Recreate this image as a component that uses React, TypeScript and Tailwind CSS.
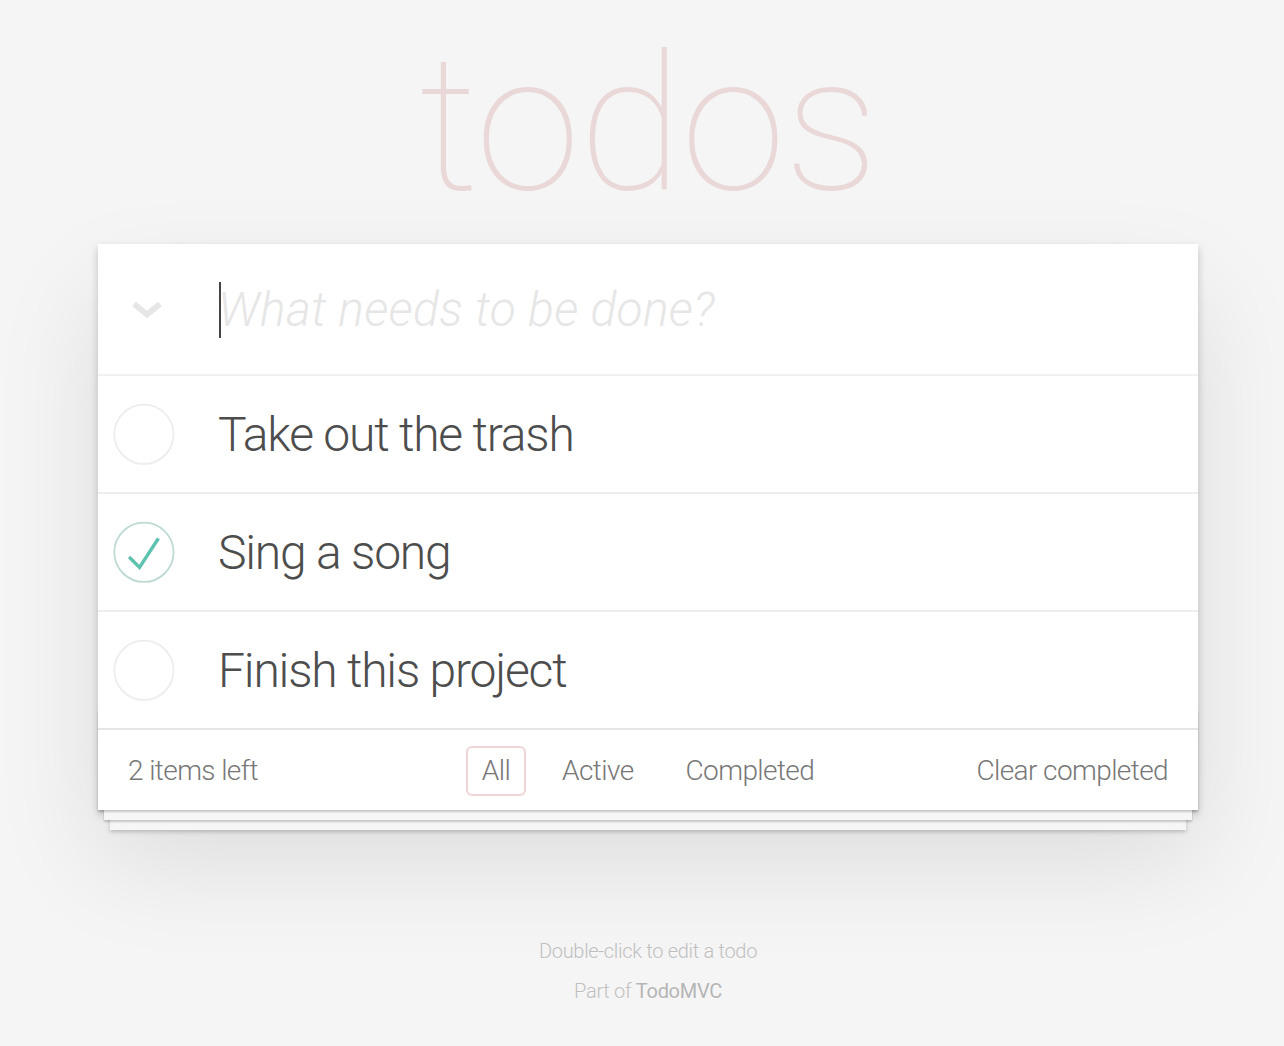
import React from "react";

const todos = [
  { text: "Take out the trash", done: false },
  { text: "Sing a song", done: true },
  { text: "Finish this project", done: false },
];

function Check({ done }: { done: boolean }) {
  return (
    <svg
      className="absolute left-0 top-[18px] h-[80px] w-[80px]"
      viewBox="-10 -18 100 135"
    >
      <circle
        cx="50"
        cy="50"
        r="50"
        fill="none"
        stroke={done ? "#bddad5" : "#ededed"}
        strokeWidth="3"
      />
      {done && (
        <path fill="#5dc2af" d="M72 25L42 71 27 56l-4 4 20 20 34-52z" />
      )}
    </svg>
  );
}

export default function App() {
  return (
    <div className="min-h-[1046px] bg-[#f5f5f5] font-[family-name:Roboto,'Liberation_Sans',sans-serif] font-light text-[#4d4d4d] antialiased">
      <div className="mx-auto w-[1112px] pl-[12px]">
        <h1 className="h-[244px] pt-[29px] text-center text-[190px] leading-[190px] tracking-[-1.5px] font-thin text-[rgba(175,47,47,0.15)]">
          todos
        </h1>
        <section className="relative bg-white shadow-[0_4px_8px_0_rgba(0,0,0,0.2),0_50px_100px_0_rgba(0,0,0,0.1)]">
          <header className="relative h-[132px] shadow-[inset_0_-2px_1px_rgba(0,0,0,0.06)]">
            <svg
              className="absolute left-[33px] top-[57px] h-[20px] w-[32px]"
              viewBox="0 0 32 20"
            >
              <polyline
                points="3,3 16,13.5 29,3"
                fill="none"
                stroke="#e6e6e6"
                strokeWidth="6"
              />
            </svg>
            <span className="absolute left-[121px] top-[38px] h-[56px] w-[2px] bg-[#444]" />
            <div className="pl-[120px] pt-[32px] text-[48px] leading-[67px] tracking-[0.3px] italic text-[#e6e6e6]">
              What needs to be done?
            </div>
          </header>
          <ul>
            {todos.map((t, i) => (
              <li
                key={t.text}
                className={
                  "relative " +
                  (i < todos.length - 1
                    ? "h-[118px] border-b-2 border-[#ededed]"
                    : "h-[116px]")
                }
              >
                <Check done={t.done} />
                <div className="pl-[120px] pt-[30px] text-[48px] leading-[58px] tracking-[-1.2px]">
                  {t.text}
                </div>
              </li>
            ))}
          </ul>
          <footer className="relative grid h-[82px] grid-cols-[1fr_auto_1fr] items-center border-t-2 border-[#e6e6e6] px-[30px] pt-[2px] text-[28px] tracking-[-0.6px] text-[#777]">
            <div className="pointer-events-none absolute bottom-0 left-0 right-0 h-[100px] shadow-[0_2px_2px_rgba(0,0,0,0.2),0_16px_0_-6px_#f6f6f6,0_18px_2px_-6px_rgba(0,0,0,0.2),0_32px_0_-12px_#f6f6f6,0_34px_4px_-12px_rgba(0,0,0,0.2)]" />
            <span>2 items left</span>
            <ul className="flex gap-[20px]">
              <li className="rounded-[6px] border-2 border-[rgba(175,47,47,0.2)] px-[14px] py-[6px] leading-[34px]">
                All
              </li>
              <li className="rounded-[6px] border-2 border-transparent px-[14px] py-[6px] leading-[34px]">
                Active
              </li>
              <li className="rounded-[6px] border-2 border-transparent px-[14px] py-[6px] leading-[34px]">
                Completed
              </li>
            </ul>
            <span className="text-right">Clear completed</span>
          </footer>
        </section>
        <footer className="mt-[131px] text-center text-[20px] leading-[20px] tracking-[-0.3px] text-[#bfbfbf] [text-shadow:0_1px_0_rgba(255,255,255,0.5)]">
          <p>Double-click to edit a todo</p>
          <p className="mt-[20px]">
            Part of <a className="font-normal text-[#b5b5b5]">TodoMVC</a>
          </p>
        </footer>
      </div>
    </div>
  );
}
